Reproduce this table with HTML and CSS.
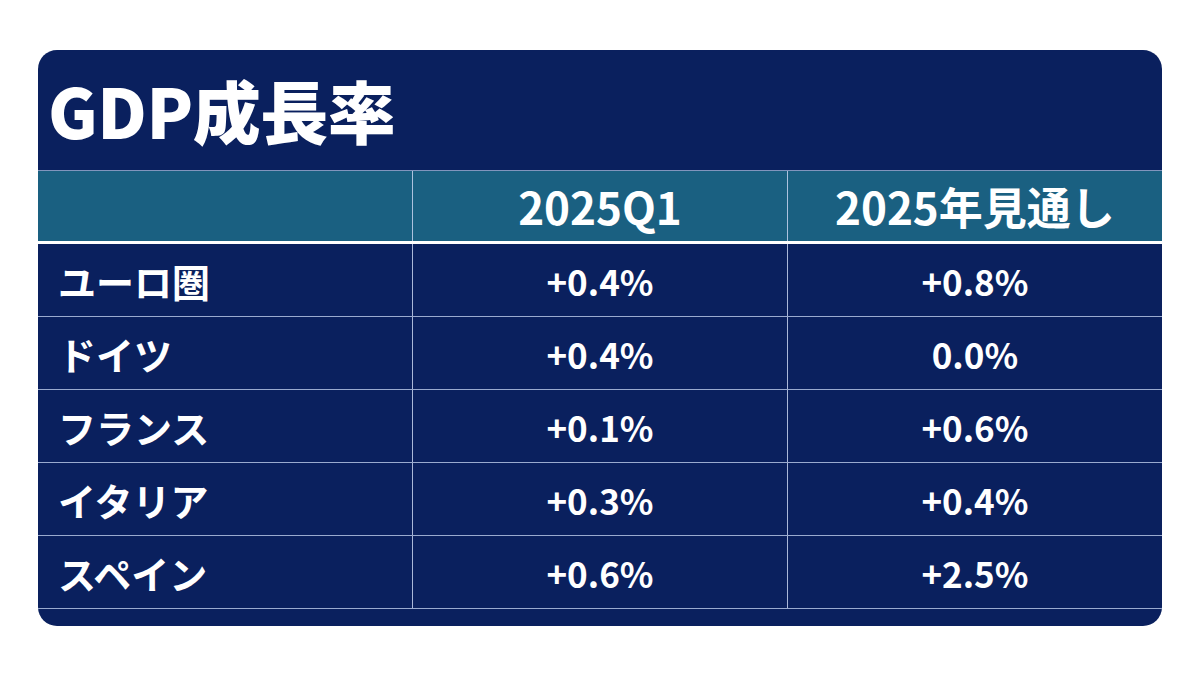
FILE: index.html
```html
<!DOCTYPE html>
<html lang="ja">
<head>
<meta charset="utf-8">
<title>GDP成長率</title>
<link rel="stylesheet" href="styles.css">
</head>
<body>
<div class="card">
  <h1 class="title">GDP成長率</h1>
  <table class="gdp">
    <thead>
      <tr>
        <th class="label"></th>
        <th>2025Q1</th>
        <th>2025年見通し</th>
      </tr>
    </thead>
    <tbody>
      <tr><td class="label">ユーロ圏</td><td>+0.4%</td><td>+0.8%</td></tr>
      <tr><td class="label">ドイツ</td><td>+0.4%</td><td>0.0%</td></tr>
      <tr><td class="label">フランス</td><td>+0.1%</td><td>+0.6%</td></tr>
      <tr><td class="label">イタリア</td><td>+0.3%</td><td>+0.4%</td></tr>
      <tr><td class="label">スペイン</td><td>+0.6%</td><td>+2.5%</td></tr>
    </tbody>
  </table>
</div>
</body>
</html>
```

FILE: styles.css
```css
html, body {
  margin: 0;
  padding: 0;
  background: #ffffff;
}

body {
  font-family: "Noto Sans CJK JP", "Noto Sans", sans-serif;
  color: #ffffff;
}

.card {
  margin: 50px 38px 0 38px;
  width: 1124px;
  height: 576px;
  background: #0a205e;
  border-radius: 19px;
  overflow: hidden;
  box-sizing: border-box;
  padding-bottom: 18px;
}

.title {
  margin: 0;
  height: 120px;
  line-height: 120px;
  padding-left: 10px;
  font-size: 68px;
  font-weight: 900;
  letter-spacing: -0.5px;
}

.gdp {
  width: 100%;
  border-collapse: collapse;
  table-layout: fixed;
}

.gdp th,
.gdp td {
  text-align: center;
  font-weight: 700;
  padding: 0;
  border-left: 1px solid rgba(200, 212, 238, 0.85);
}

.gdp th:first-child,
.gdp td:first-child {
  border-left: none;
}

.gdp th {
  height: 70px;
  background: #1a6081;
  font-size: 44px;
  border-top: 1px solid rgba(180, 200, 230, 0.7);
  border-bottom: 3px solid #ffffff;
}

.gdp td {
  height: 72px;
  font-size: 35px;
  border-bottom: 1px solid rgba(190, 205, 235, 0.8);
}

.gdp td.label {
  text-align: left;
  padding-left: 20px;
  font-size: 38px;
}
```
